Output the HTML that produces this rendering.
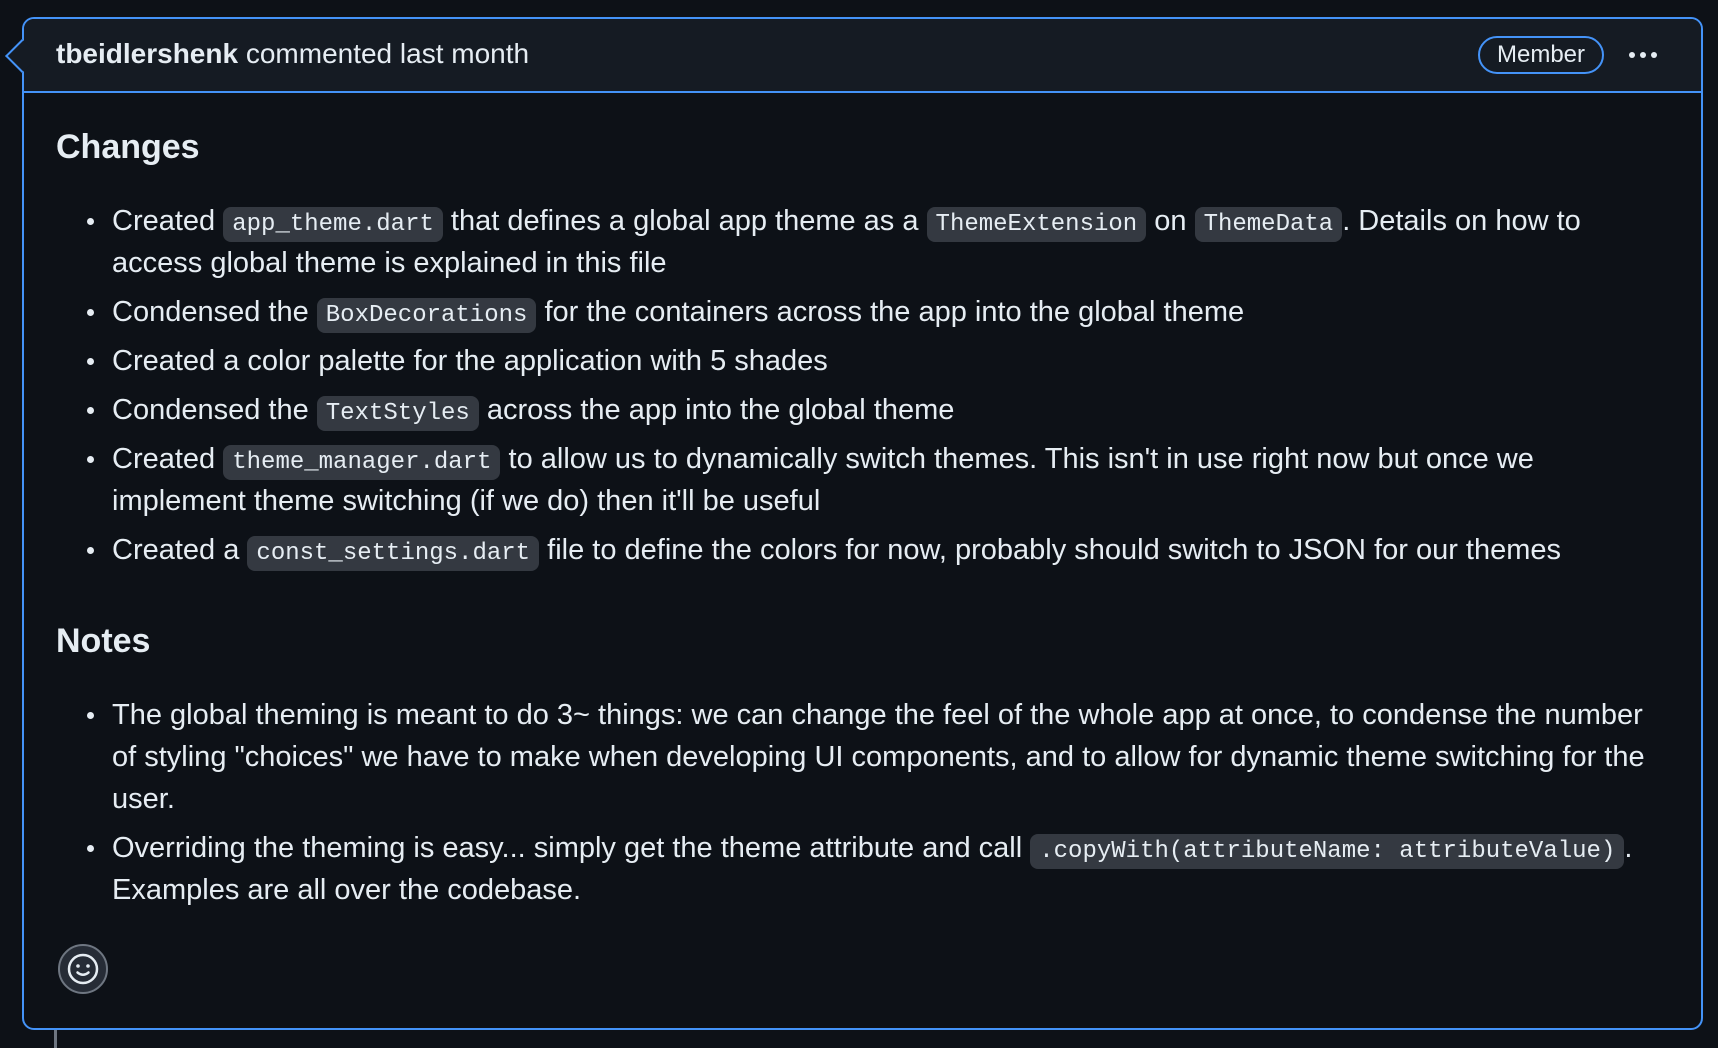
<!DOCTYPE html>
<html><head><meta charset="utf-8"><style>
html,body{margin:0;padding:0;background:#0d1117;width:1718px;height:1046px;overflow:hidden;font-family:"Liberation Sans",Arial,sans-serif;color:#e6edf3}
.card{position:absolute;left:22px;top:17px;width:1681px;height:1013px;border:2px solid #4493f8;border-radius:12px;background:#0d1117;box-sizing:border-box}
.hdr{position:absolute;left:0;top:0;right:0;height:72px;background:#151b23;border-bottom:2px solid #4493f8;border-radius:10px 10px 0 0}
.hdr .t{position:absolute;left:32px;top:17px;font-size:28px;line-height:36px;white-space:nowrap}
.badge{position:absolute;left:1454px;top:17px;width:126px;height:38px;box-sizing:border-box;border:2px solid #4493f8;border-radius:20px;font-size:24px;line-height:34px;text-align:center;font-weight:400;color:#e6edf3}
.dots{position:absolute;left:1605px;top:33px}
.dots i{display:inline-block;width:6px;height:6px;border-radius:50%;background:#e6edf3;margin-right:5px;vertical-align:top}
.ptr{position:absolute;transform:rotate(45deg);border-left:2px solid #4493f8;border-bottom:2px solid #4493f8;background:#151b23;width:22px;height:22px;left:-14px;top:25px}
h2{position:absolute;left:32px;margin:0;font-size:34px;font-weight:700;line-height:40px}
ul{position:absolute;left:32px;margin:0;padding:0 0 0 56px;width:1620px;list-style:none;font-size:29px;line-height:42px}
li{position:relative;margin-bottom:7px;white-space:nowrap}
li:before{content:"";position:absolute;left:-25px;top:18px;width:7px;height:7px;border-radius:50%;background:#e6edf3}
code{font-family:"Liberation Mono","DejaVu Sans Mono",monospace;font-size:24px;line-height:1;background:#343941;border-radius:8px;padding:4px 9px}
.emo{position:absolute;left:34px;top:925px;width:50px;height:50px;box-sizing:border-box;border-radius:50%;border:2px solid #6e7681;background:#262c36}
.line{position:absolute;left:54px;top:1028px;width:3px;height:20px;background:#6e7681}
</style></head><body>
<div class="line"></div>
<div class="card">
<div class="hdr"><div class="ptr"></div>
<div class="t"><b>tbeidlershenk</b> commented last month</div>
<div class="badge">Member</div>
<div class="dots"><i></i><i></i><i></i></div>
</div>
<h2 style="top:108px">Changes</h2>
<ul style="top:181px">
<li>Created <code>app_theme.dart</code> that defines a global app theme as a <code>ThemeExtension</code> on <code>ThemeData</code>. Details on how to<br>access global theme is explained in this file</li>
<li>Condensed the <code>BoxDecorations</code> for the containers across the app into the global theme</li>
<li>Created a color palette for the application with 5 shades</li>
<li>Condensed the <code>TextStyles</code> across the app into the global theme</li>
<li>Created <code>theme_manager.dart</code> to allow us to dynamically switch themes. This isn't in use right now but once we<br>implement theme switching (if we do) then it'll be useful</li>
<li>Created a <code>const_settings.dart</code> file to define the colors for now, probably should switch to JSON for our themes</li>
</ul>
<h2 style="top:602px">Notes</h2>
<ul style="top:675px">
<li>The global theming is meant to do 3~ things: we can change the feel of the whole app at once, to condense the number<br>of styling "choices" we have to make when developing UI components, and to allow for dynamic theme switching for the<br>user.</li>
<li>Overriding the theming is easy... simply get the theme attribute and call <code>.copyWith(attributeName: attributeValue)</code>.<br>Examples are all over the codebase.</li>
</ul>
<div class="emo"><svg width="46" height="46" viewBox="0 0 46 46" style="position:absolute;left:0;top:0"><circle cx="23" cy="23" r="14" fill="none" stroke="#e6edf3" stroke-width="2.5"/><circle cx="18" cy="20" r="1.8" fill="#e6edf3"/><circle cx="28" cy="20" r="1.8" fill="#e6edf3"/><path d="M17.5 26.5 Q23 31 28.5 26.5" fill="none" stroke="#e6edf3" stroke-width="2.5" stroke-linecap="round"/></svg></div>
</div>
</body></html>
